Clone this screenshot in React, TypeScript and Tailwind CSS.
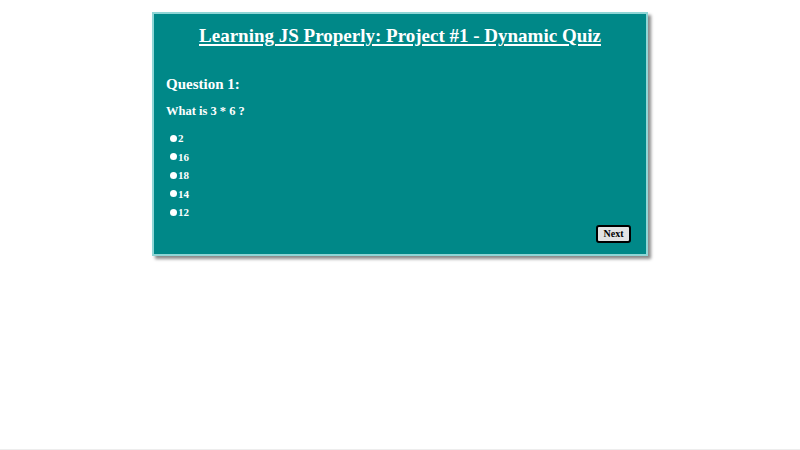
const options = ["2", "16", "18", "14", "12"];

export default function App() {
  return (
    <div className="h-[450px] border-b border-[#ededed] bg-white pt-3" style={{ fontFamily: '"Liberation Serif", "Times New Roman", serif' }}>
      <div className="mx-auto w-[496px] border-2 border-[#8fd6d6] bg-[#008888] text-white shadow-[3px_3px_3px_#8a8a8a]">
        <h1 className="mt-[10px] text-center text-[19px] font-bold leading-[23px] underline underline-offset-2 decoration-[1.5px]">
          Learning JS Properly: Project #1 - Dynamic Quiz
        </h1>
        <div className="pl-[12px] pr-[10px]">
          <h2 className="mt-[29px] text-[15px] font-bold leading-[17px]">Question 1:</h2>
          <p className="mt-[11px] text-[12.5px] font-bold leading-[15px]">What is 3 * 6 ?</p>
          <ul className="mt-[10px] pl-[4px]">
            {options.map((o) => (
              <li key={o} className="flex h-[18.5px] items-center gap-[1px] text-[11px] font-bold">
                <span className="inline-block h-[7px] w-[7px] rounded-full bg-white" />
                <span>{o}</span>
              </li>
            ))}
          </ul>
          <div className="mt-[3px] flex justify-end pb-[11px] pr-[5px]">
            <button className="h-[18px] w-[35px] rounded-[3px] border-2 border-black bg-[#e3e3e3] text-[10px] font-bold leading-none text-black">
              Next
            </button>
          </div>
        </div>
      </div>
    </div>
  );
}
